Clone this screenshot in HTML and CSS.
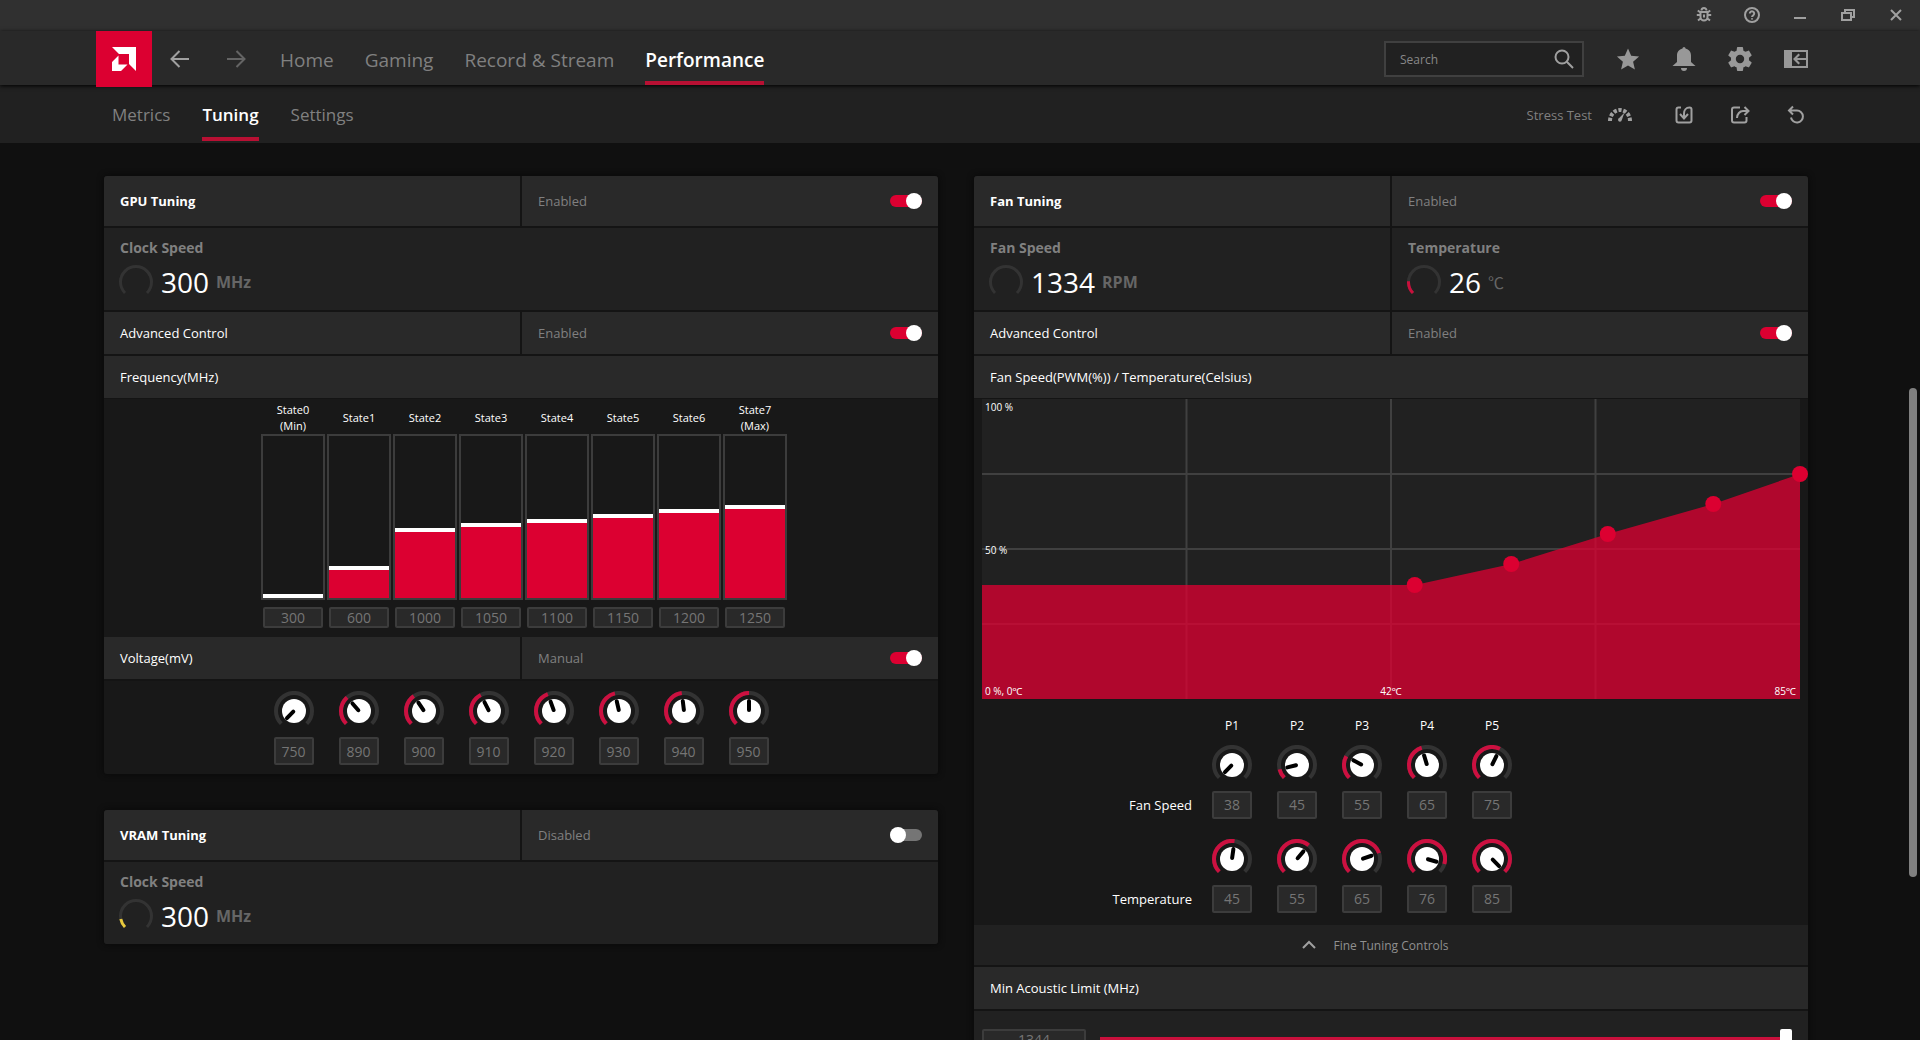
FILE: index.html
```html
<!DOCTYPE html>
<html lang="en">
<head>
    <meta charset="UTF-8">
    <meta name="viewport" content="width=device-width, initial-scale=1.0">
    <title>Performance - Tuning</title>
    <link rel="stylesheet" href="styles.css">
</head>
<body>
    <!-- Shared shapes -->
    <svg class="sprite" aria-hidden="true">
        <symbol id="knob" viewBox="0 0 40 40">
            <path class="dial-track" d="M7.3 32.7A18 18 0 1 1 32.7 32.7"/>
            <path class="dial-value" pathLength="270" d="M7.3 32.7A18 18 0 1 1 32.7 32.7"/>
            <circle cx="20" cy="20" r="12" fill="#fff"/>
            <path class="knob-hand" d="M20 19V10"/>
        </symbol>
        <symbol id="gauge" viewBox="0 0 34 34">
            <path class="dial-track" d="M6 28A15.5 15.5 0 1 1 28 28"/>
            <path class="dial-value" pathLength="270" d="M6 28A15.5 15.5 0 1 1 28 28"/>
        </symbol>
    </svg>

    <div class="titlebar">
        <button class="title-btn" aria-label="Report a bug">
            <svg class="icon" viewBox="0 0 16 16" width="16" height="16">
                <path d="M5.5 3.5a2.5 2.5 0 0 1 5 0M4.5 5h7v5a3.5 3.5 0 0 1-7 0zM8 7.500v3M4.500 8H.8M15.200 8h-3.700M4.500 5.500 1.800 3.500M11.500 5.500l2.700-2M4.800 11.200l-2.800 2.300M11.200 11.200l2.800 2.300"/>
            </svg>
        </button>
        <button class="title-btn" aria-label="Help">
            <svg class="icon" viewBox="0 0 16 16" width="16" height="16">
                <circle cx="8" cy="8" r="7"/>
                <path d="M5.800 6.500a2.200 2.200 0 1 1 3.400 1.800c-.8.5-1.200.8-1.200 1.700M8 11.200v1.300"/>
            </svg>
        </button>
        <button class="title-btn" aria-label="Minimize">
            <svg class="icon" viewBox="0 0 16 16" width="16" height="16"><path d="M2 11h12"/></svg>
        </button>
        <button class="title-btn" aria-label="Restore">
            <svg class="icon" viewBox="0 0 16 16" width="16" height="16"><path d="M2 6h9v7H2zM5 6V3h9v7h-3"/></svg>
        </button>
        <button class="title-btn" aria-label="Close">
            <svg class="icon" viewBox="0 0 16 16" width="16" height="16"><path d="M3 3l10 10M13 3 3 13"/></svg>
        </button>
    </div>

    <header class="header">
        <a class="logo" href="#" aria-label="Dashboard">
            <svg viewBox="0 0 24 24" width="24" height="24">
                <path fill="#fff" d="M0 0H24V24L17 17V7H7zM6.500 8.500V17.500H15.500L9 24H0V15z"/>
            </svg>
        </a>
        <button class="icon-btn" aria-label="Back">
            <svg class="icon" viewBox="0 0 24 24" width="24" height="24"><path d="M21 12H4M11.500 4 3.500 12l8 8"/></svg>
        </button>
        <button class="icon-btn dim" aria-label="Forward">
            <svg class="icon" viewBox="0 0 24 24" width="24" height="24"><path d="M3 12h17M12.500 4l8 8-8 8"/></svg>
        </button>
        <nav class="nav">
            <a href="#">Home</a>
            <a href="#">Gaming</a>
            <a href="#">Record &amp; Stream</a>
            <a href="#" class="active">Performance</a>
        </nav>
        <div class="header-right">
            <label class="search">
                <input type="text" placeholder="Search" aria-label="Search">
                <svg class="icon" viewBox="0 0 20 20" width="20" height="20"><circle cx="8" cy="8" r="6.500"/><path d="M12.800 12.800 19 19"/></svg>
            </label>
            <button class="icon-btn" aria-label="Favorites">
                <svg class="solid" viewBox="0 0 24 24" width="24" height="24"><path d="M12 1.500l3.200 7.300 7.900.7-6 5.200 1.800 7.800L12 18.400l-6.900 4.100 1.800-7.800-6-5.200 7.900-.7z"/></svg>
            </button>
            <button class="icon-btn" aria-label="Notifications">
                <svg class="solid" viewBox="0 0 24 24" width="24" height="24"><path d="M12 0a1.500 1.500 0 0 1 1.500 1.500C17 2.300 19 5 19 8.500V15l4.500 4H.5L5 15V8.500C5 5 7 2.300 10.500 1.500A1.500 1.500 0 0 1 12 0zM9 21h6a3 3 0 0 1-6 0z"/></svg>
            </button>
            <button class="icon-btn" aria-label="Settings">
                <svg class="solid" viewBox="2 2 20 20" width="24" height="24"><path d="M19.430 12.980c.04-.32.07-.64.07-.98s-.03-.66-.07-.98l2.110-1.650c.19-.15.240-.42.120-.64l-2-3.460c-.12-.22-.39-.3-.61-.22l-2.490 1c-.52-.4-1.080-.73-1.690-.98l-.38-2.650C14.460 2.180 14.250 2 14 2h-4c-.25 0-.46.18-.49.42l-.38 2.650c-.61.25-1.170.59-1.690.98l-2.490-1c-.23-.09-.49 0-.61.22l-2 3.460c-.13.22-.07.49.12.64l2.110 1.650c-.04.32-.07.65-.07.98s.03.66.07.98l-2.110 1.650c-.19.15-.24.42-.12.64l2 3.460c.12.22.39.3.61.22l2.490-1c.52.4 1.080.73 1.690.98l.38 2.650c.03.24.24.42.49.42h4c.25 0 .46-.18.49-.42l.38-2.650c.61-.25 1.170-.59 1.690-.98l2.490 1c.23.09.49 0 .61-.22l2-3.460c.12-.22.07-.49-.12-.64zM12 15.500a3.500 3.500 0 1 1 0-7 3.500 3.500 0 0 1 0 7z"/></svg>
            </button>
            <button class="icon-btn" aria-label="Dock sidebar">
                <svg class="solid" viewBox="0 0 24 24" width="24" height="24"><path fill-rule="evenodd" d="M0 3h24v18H0zM8 5v14h14V5zM14.500 6.500 16 8l-3 3h9v2h-9l3 3-1.500 1.500L9 12z"/></svg>
            </button>
        </div>
    </header>

    <div class="subnav">
        <nav class="tabs">
            <a href="#">Metrics</a>
            <a href="#" class="active">Tuning</a>
            <a href="#">Settings</a>
        </nav>
        <div class="subnav-right">
            <button class="stress-btn">
                Stress Test
                <svg viewBox="0 0 24 24" width="24" height="24">
                    <path fill="none" stroke="#a0a0a0" stroke-width="4" pathLength="100" stroke-dasharray="10 5" d="M2 18a10 11 0 0 1 20 0"/>
                    <path fill="#a0a0a0" d="M16.500 9.500 13.800 17a1.900 1.900 0 1 1-2.600-2z"/>
                </svg>
            </button>
            <button class="icon-btn" aria-label="Import">
                <svg class="icon" viewBox="0 0 24 24" width="24" height="24"><path d="M9 4.500H6.500a2 2 0 0 0-2 2v11a2 2 0 0 0 2 2h11a2 2 0 0 0 2-2v-11a2 2 0 0 0-2-2c-3.500 0-5.500 3-5.500 6v4M8 11l4 4.500 4-4.500"/></svg>
            </button>
            <button class="icon-btn" aria-label="Export">
                <svg class="icon" viewBox="0 0 24 24" width="24" height="24"><path d="M12 4.500H6a2 2 0 0 0-2 2v11a2 2 0 0 0 2 2h10.500a2 2 0 0 0 2-2V14M9 15c0-4 3-7 6-7h5M16.500 4l4 4-4 4"/></svg>
            </button>
            <button class="icon-btn" aria-label="Reset">
                <svg class="icon" viewBox="0 0 24 24" width="24" height="24"><path d="M5 7.500h8a6 6 0 1 1-6 7M9 3.500l-4 4 4 4"/></svg>
            </button>
        </div>
    </div>

    <main class="content">
        <div class="column">
            <!-- GPU Tuning -->
            <section class="panel">
                <div class="row row-title">
                    <h2 class="cell">GPU Tuning</h2>
                    <label class="cell toggle">Enabled <input type="checkbox" checked></label>
                </div>
                <div class="row">
                    <div class="cell metric">
                        <span class="metric-name">Clock Speed</span>
                        <div class="metric-value">
                            <svg class="gauge" style="--v: 0"><use href="#gauge"/></svg>
                            <span class="number">300</span>
                            <span class="unit">MHz</span>
                        </div>
                    </div>
                </div>
                <div class="row">
                    <h3 class="cell">Advanced Control</h3>
                    <label class="cell toggle">Enabled <input type="checkbox" checked></label>
                </div>
                <div class="row row-chart">
                    <h3 class="cell">Frequency(MHz)</h3>
                </div>
                <div class="states">
                    <div class="state">
                        <label for="s0">State0<br>(Min)</label>
                        <div class="bar"><div class="fill" style="height: 4px"></div></div>
                        <input class="box" id="s0" type="text" value="300">
                    </div>
                    <div class="state">
                        <label for="s1">State1</label>
                        <div class="bar"><div class="fill" style="height: 32px"></div></div>
                        <input class="box" id="s1" type="text" value="600">
                    </div>
                    <div class="state">
                        <label for="s2">State2</label>
                        <div class="bar"><div class="fill" style="height: 70px"></div></div>
                        <input class="box" id="s2" type="text" value="1000">
                    </div>
                    <div class="state">
                        <label for="s3">State3</label>
                        <div class="bar"><div class="fill" style="height: 75px"></div></div>
                        <input class="box" id="s3" type="text" value="1050">
                    </div>
                    <div class="state">
                        <label for="s4">State4</label>
                        <div class="bar"><div class="fill" style="height: 79px"></div></div>
                        <input class="box" id="s4" type="text" value="1100">
                    </div>
                    <div class="state">
                        <label for="s5">State5</label>
                        <div class="bar"><div class="fill" style="height: 84px"></div></div>
                        <input class="box" id="s5" type="text" value="1150">
                    </div>
                    <div class="state">
                        <label for="s6">State6</label>
                        <div class="bar"><div class="fill" style="height: 89px"></div></div>
                        <input class="box" id="s6" type="text" value="1200">
                    </div>
                    <div class="state">
                        <label for="s7">State7<br>(Max)</label>
                        <div class="bar"><div class="fill" style="height: 93px"></div></div>
                        <input class="box" id="s7" type="text" value="1250">
                    </div>
                </div>
                <div class="row">
                    <h3 class="cell">Voltage(mV)</h3>
                    <label class="cell toggle">Manual <input type="checkbox" checked></label>
                </div>
                <div class="knobs">
                    <div class="knob-item"><svg class="knob" style="--v: 0"><use href="#knob"/></svg><input class="box" type="text" value="750" aria-label="Voltage state 0"></div>
                    <div class="knob-item"><svg class="knob" style="--v: 94"><use href="#knob"/></svg><input class="box" type="text" value="890" aria-label="Voltage state 1"></div>
                    <div class="knob-item"><svg class="knob" style="--v: 101"><use href="#knob"/></svg><input class="box" type="text" value="900" aria-label="Voltage state 2"></div>
                    <div class="knob-item"><svg class="knob" style="--v: 108"><use href="#knob"/></svg><input class="box" type="text" value="910" aria-label="Voltage state 3"></div>
                    <div class="knob-item"><svg class="knob" style="--v: 115"><use href="#knob"/></svg><input class="box" type="text" value="920" aria-label="Voltage state 4"></div>
                    <div class="knob-item"><svg class="knob" style="--v: 122"><use href="#knob"/></svg><input class="box" type="text" value="930" aria-label="Voltage state 5"></div>
                    <div class="knob-item"><svg class="knob" style="--v: 128"><use href="#knob"/></svg><input class="box" type="text" value="940" aria-label="Voltage state 6"></div>
                    <div class="knob-item"><svg class="knob" style="--v: 135"><use href="#knob"/></svg><input class="box" type="text" value="950" aria-label="Voltage state 7"></div>
                </div>
            </section>

            <!-- VRAM Tuning -->
            <section class="panel">
                <div class="row row-title">
                    <h2 class="cell">VRAM Tuning</h2>
                    <label class="cell toggle">Disabled <input type="checkbox"></label>
                </div>
                <div class="row">
                    <div class="cell metric">
                        <span class="metric-name">Clock Speed</span>
                        <div class="metric-value">
                            <svg class="gauge yellow" style="--v: 34"><use href="#gauge"/></svg>
                            <span class="number">300</span>
                            <span class="unit">MHz</span>
                        </div>
                    </div>
                </div>
            </section>
        </div>

        <div class="column">
            <!-- Fan Tuning -->
            <section class="panel">
                <div class="row row-title">
                    <h2 class="cell">Fan Tuning</h2>
                    <label class="cell toggle">Enabled <input type="checkbox" checked></label>
                </div>
                <div class="row">
                    <div class="cell metric">
                        <span class="metric-name">Fan Speed</span>
                        <div class="metric-value">
                            <svg class="gauge" style="--v: 0"><use href="#gauge"/></svg>
                            <span class="number">1334</span>
                            <span class="unit">RPM</span>
                        </div>
                    </div>
                    <div class="cell metric">
                        <span class="metric-name">Temperature</span>
                        <div class="metric-value">
                            <svg class="gauge" style="--v: 48"><use href="#gauge"/></svg>
                            <span class="number">26</span>
                            <span class="unit degree">℃</span>
                        </div>
                    </div>
                </div>
                <div class="row">
                    <h3 class="cell">Advanced Control</h3>
                    <label class="cell toggle">Enabled <input type="checkbox" checked></label>
                </div>
                <div class="row row-chart">
                    <h3 class="cell">Fan Speed(PWM(%)) / Temperature(Celsius)</h3>
                </div>
                <div class="curve">
                    <svg class="chart">
                        <g class="grid">
                            <line x1="25%" x2="25%" y1="0" y2="100%"/>
                            <line x1="50%" x2="50%" y1="0" y2="100%"/>
                            <line x1="75%" x2="75%" y1="0" y2="100%"/>
                            <line x1="0" x2="100%" y1="25%" y2="25%"/>
                            <line x1="0" x2="100%" y1="50%" y2="50%"/>
                            <line x1="0" x2="100%" y1="75%" y2="75%"/>
                        </g>
                        <svg viewBox="0 0 85 100" preserveAspectRatio="none">
                            <polygon class="area" points="0,62 45,62 55,55 65,45 76,35 85,25 85,100 0,100"/>
                        </svg>
                        <g class="points">
                            <circle cx="52.9%" cy="62%" r="8"/>
                            <circle cx="64.7%" cy="55%" r="8"/>
                            <circle cx="76.5%" cy="45%" r="8"/>
                            <circle cx="89.4%" cy="35%" r="8"/>
                            <circle cx="100%" cy="25%" r="8"/>
                        </g>
                    </svg>
                    <span class="axis top">100 %</span>
                    <span class="axis middle">50 %</span>
                    <span class="axis bottom">0 %, 0℃</span>
                    <span class="axis bottom center">42℃</span>
                    <span class="axis bottom right">85℃</span>
                </div>
                <div class="points-table">
                    <div class="points-row heads">
                        <span class="points-label"></span>
                        <span>P1</span><span>P2</span><span>P3</span><span>P4</span><span>P5</span>
                    </div>
                    <div class="points-row">
                        <span class="points-label">Fan Speed</span>
                        <div class="knob-item"><svg class="knob" style="--v: 0"><use href="#knob"/></svg><input class="box" type="text" value="38" aria-label="Fan speed P1"></div>
                        <div class="knob-item"><svg class="knob" style="--v: 31"><use href="#knob"/></svg><input class="box" type="text" value="45" aria-label="Fan speed P2"></div>
                        <div class="knob-item"><svg class="knob" style="--v: 74"><use href="#knob"/></svg><input class="box" type="text" value="55" aria-label="Fan speed P3"></div>
                        <div class="knob-item"><svg class="knob" style="--v: 118"><use href="#knob"/></svg><input class="box" type="text" value="65" aria-label="Fan speed P4"></div>
                        <div class="knob-item"><svg class="knob" style="--v: 161"><use href="#knob"/></svg><input class="box" type="text" value="75" aria-label="Fan speed P5"></div>
                    </div>
                    <div class="points-row">
                        <span class="points-label">Temperature</span>
                        <div class="knob-item"><svg class="knob" style="--v: 143"><use href="#knob"/></svg><input class="box" type="text" value="45" aria-label="Temperature P1"></div>
                        <div class="knob-item"><svg class="knob" style="--v: 175"><use href="#knob"/></svg><input class="box" type="text" value="55" aria-label="Temperature P2"></div>
                        <div class="knob-item"><svg class="knob" style="--v: 206"><use href="#knob"/></svg><input class="box" type="text" value="65" aria-label="Temperature P3"></div>
                        <div class="knob-item"><svg class="knob" style="--v: 241"><use href="#knob"/></svg><input class="box" type="text" value="76" aria-label="Temperature P4"></div>
                        <div class="knob-item"><svg class="knob" style="--v: 270"><use href="#knob"/></svg><input class="box" type="text" value="85" aria-label="Temperature P5"></div>
                    </div>
                </div>
                <button class="fine-tuning">
                    <svg class="icon" viewBox="0 0 16 16" width="16" height="16"><path d="M2 11l6-6 6 6"/></svg>
                    Fine Tuning Controls
                </button>
                <div class="row">
                    <h3 class="cell">Min Acoustic Limit (MHz)</h3>
                </div>
                <div class="limit">
                    <input class="box" type="text" value="1344" aria-label="Min acoustic limit value">
                    <input class="slider" type="range" min="0" max="100" value="100" aria-label="Min acoustic limit">
                </div>
            </section>
        </div>
        <div class="scrollbar"></div>
    </main>
</body>
</html>
```
FILE: styles.css
```css
* {
    margin: 0;
    padding: 0;
    box-sizing: border-box;
}

body {
    height: 100vh;
    display: flex;
    flex-direction: column;
    overflow: hidden;
    background: #101010;
    color: #fff;
    font-family: "Open Sans", "Noto Sans", "Noto Sans CJK JP", sans-serif;
    font-size: 13px;
}

a {
    color: inherit;
    text-decoration: none;
}

button,
input {
    font: inherit;
    color: inherit;
    background: none;
    border: none;
}

svg {
    display: block;
}

.sprite {
    position: absolute;
    width: 0;
    height: 0;
}

.icon {
    fill: none;
    stroke: #a0a0a0;
    stroke-width: 2;
}

.solid {
    fill: #989898;
}

/* Title bar */
.titlebar {
    display: flex;
    justify-content: flex-end;
    height: 31px;
    padding-bottom: 1px;
    background: #303030;
}

.title-btn {
    width: 48px;
    display: flex;
    align-items: center;
    justify-content: center;
}

/* Header */
.header {
    display: flex;
    align-items: center;
    gap: 32px;
    height: 54px;
    padding: 2px 112px 0 96px;
    background: #292929;
    box-shadow: 0 1px 4px #000;
    z-index: 2;
}

.logo {
    display: flex;
    align-items: center;
    justify-content: center;
    align-self: flex-start;
    width: 56px;
    height: 56px;
    margin: -2px -16px 0 0;
    background: #dc0031;
    flex-shrink: 0;
}

.icon-btn {
    width: 24px;
    height: 24px;
    flex-shrink: 0;
}

.dim {
    opacity: 0.5;
}

.nav,
.tabs {
    display: flex;
    gap: 32px;
    align-self: stretch;
    color: #808080;
    white-space: nowrap;
}

.nav {
    gap: 31px;
    font-size: 19px;
}

.nav a,
.tabs a {
    display: flex;
    align-items: center;
    border-top: 6px solid transparent;
    border-bottom: 4px solid transparent;
}

.nav .active,
.tabs .active {
    color: #fff;
    font-weight: 600;
    border-bottom-color: #b81033;
}

.header-right {
    display: flex;
    align-items: center;
    gap: 32px;
    margin-left: auto;
}

.search {
    display: flex;
    align-items: center;
    width: 200px;
    height: 36px;
    padding: 0 8px 0 14px;
    border: 2px solid #404040;
    background: #212121;
}

.search input {
    flex: 1;
    min-width: 0;
    font-size: 12px;
    outline: none;
}

.search input::placeholder {
    color: #888;
}

/* Sub navigation */
.subnav {
    display: flex;
    justify-content: space-between;
    align-items: center;
    height: 58px;
    padding: 1px 112px 0;
    background: #212121;
}

.tabs {
    font-size: 17px;
    padding-bottom: 2px;
}

.subnav-right {
    display: flex;
    align-items: center;
    gap: 32px;
}

.stress-btn {
    display: flex;
    align-items: center;
    gap: 16px;
    margin-right: 8px;
    color: #808080;
}

/* Content */
.content {
    position: relative;
    flex: 1;
    min-height: 0;
    display: flex;
    align-items: flex-start;
    gap: 36px;
    padding: 33px 112px 0 104px;
    overflow: hidden;
}

.column {
    flex: 1;
    min-width: 0;
}

.panel {
    margin-bottom: 36px;
    background: #181818;
    border-radius: 3px;
    box-shadow: 0 0 6px #080808;
    overflow: hidden;
}

.row {
    display: flex;
    gap: 2px;
    border-bottom: 2px solid #141414;
    background: #141414;
}

.row-chart {
    border-bottom-width: 1px;
}

.row:last-child {
    border-bottom: none;
}

.cell {
    flex: 1;
    min-height: 42px;
    padding: 0 16px;
    display: flex;
    align-items: center;
    background: #292929;
}

.row-title .cell {
    min-height: 50px;
}

h2 {
    font-size: 13px;
    font-weight: 700;
}

h3 {
    font-size: 13px;
    font-weight: 400;
}

.toggle {
    justify-content: space-between;
    color: #808080;
}

.toggle input {
    appearance: none;
    display: flex;
    align-items: center;
    width: 32px;
    height: 12px;
    border-radius: 6px;
    background: #757575;
}

.toggle input::before {
    content: '';
    width: 16px;
    height: 16px;
    flex-shrink: 0;
    border-radius: 50%;
    background: #fff;
}

.toggle input:checked {
    justify-content: flex-end;
    background: #dc0031;
}

/* Metric cells */
.metric {
    flex-direction: column;
    align-items: flex-start;
    gap: 4px;
    height: 82px;
    padding-top: 10px;
    background: #212121;
}

.metric-name {
    color: #808080;
    font-size: 14px;
    font-weight: 700;
    line-height: 20px;
}

.metric-value {
    display: flex;
    align-items: center;
    margin-left: -1px;
    line-height: 40px;
}

.gauge {
    --stroke: 3;
    width: 34px;
    height: 34px;
    color: #c9103c;
}

.yellow {
    color: #e8c93c;
}

.number {
    margin: 0 7px 0 8px;
    font-size: 28px;
}

.unit {
    color: #666;
    font-size: 16px;
    font-weight: 700;
}

.degree {
    font-family: "Noto Sans CJK JP", sans-serif;
    font-weight: 400;
}

.dial-track,
.dial-value {
    fill: none;
    stroke: #333;
    stroke-width: var(--stroke);
}

.dial-value {
    stroke: currentColor;
    stroke-dasharray: var(--v) 400;
}

.knob {
    --stroke: 4;
    width: 40px;
    height: 40px;
    color: #cc1040;
}

.knob-hand {
    fill: none;
    stroke: #000;
    stroke-width: 4;
    stroke-linecap: round;
    transform-origin: 20px 20px;
    transform: rotate(calc(var(--v) * 1deg - 135deg));
}

.box {
    width: 40px;
    height: 28px;
    border: 2px solid #3c3c3c;
    border-radius: 2px;
    background: #292929;
    color: #757575;
    font-size: 14px;
    text-align: center;
}

/* Frequency states */
.states {
    display: flex;
    justify-content: center;
    gap: 2px;
    padding: 3px 0 9px 6px;
}

.state {
    display: flex;
    flex-direction: column;
    align-items: center;
    width: 64px;
}

.state label {
    display: flex;
    align-items: center;
    height: 32px;
    font-size: 11px;
    line-height: 16px;
    text-align: center;
}

.bar {
    display: flex;
    align-items: flex-end;
    width: 64px;
    height: 166px;
    border: 2px solid #3c3c3c;
    margin-bottom: 7px;
}

.fill {
    width: 100%;
    border-top: 4px solid #fff;
    background: #dc0031;
}

.state .box {
    width: 60px;
    height: 21px;
}

/* Knobs */
.knobs {
    display: flex;
    justify-content: center;
    gap: 25px;
    padding: 10px 0 9px;
}

.knob-item {
    display: flex;
    flex-direction: column;
    align-items: center;
    gap: 6px;
}

/* Fan curve */
.curve {
    position: relative;
    margin: 0 8px;
    font-size: 10px;
    line-height: 16px;
}

.chart {
    width: 100%;
    height: 300px;
    background: #212121;
    overflow: visible;
}

.grid {
    stroke: #404040;
    stroke-width: 2;
}

.area {
    fill: #dc0031;
    fill-opacity: 0.77;
}

.points {
    fill: #dc0031;
}

.axis {
    position: absolute;
    left: 3px;
}

.top {
    top: 0;
}

.middle {
    top: 143px;
}

.bottom {
    bottom: 0;
}

.center {
    left: 0;
    right: 0;
    text-align: center;
}

.right {
    left: auto;
    right: 4px;
}

.points-table {
    display: flex;
    flex-direction: column;
    gap: 20px;
    padding: 19px 0 12px;
}

.points-row {
    display: flex;
    gap: 25px;
    line-height: 28px;
}

.heads {
    font-size: 12px;
    line-height: 16px;
    margin-bottom: -9px;
}

.heads span {
    width: 40px;
    text-align: center;
}

.points-row .points-label {
    align-self: flex-end;
    width: 218px;
    margin-right: -5px;
    text-align: right;
}

.fine-tuning {
    display: flex;
    align-items: center;
    justify-content: center;
    width: 100%;
    height: 42px;
    border-bottom: 2px solid #141414;
    background: #212121;
    color: #909090;
    font-size: 12px;
}

.fine-tuning .icon {
    margin: 0 16px 0 -32px;
}

.limit {
    display: flex;
    align-items: flex-start;
    gap: 14px;
    padding: 18px 16px 18px 8px;
    background: #212121;
}

.limit .box {
    width: 104px;
    height: 21px;
}

.slider {
    appearance: none;
    flex: 1;
    height: 4px;
    margin-top: 8px;
    background: #c9103c;
}

.slider::-webkit-slider-thumb {
    appearance: none;
    width: 12px;
    height: 20px;
    border-radius: 2px;
    background: #fff;
}

.scrollbar {
    position: absolute;
    top: 245px;
    right: 3px;
    width: 8px;
    height: 489px;
    border-radius: 4px;
    background: #808080;
}
```
